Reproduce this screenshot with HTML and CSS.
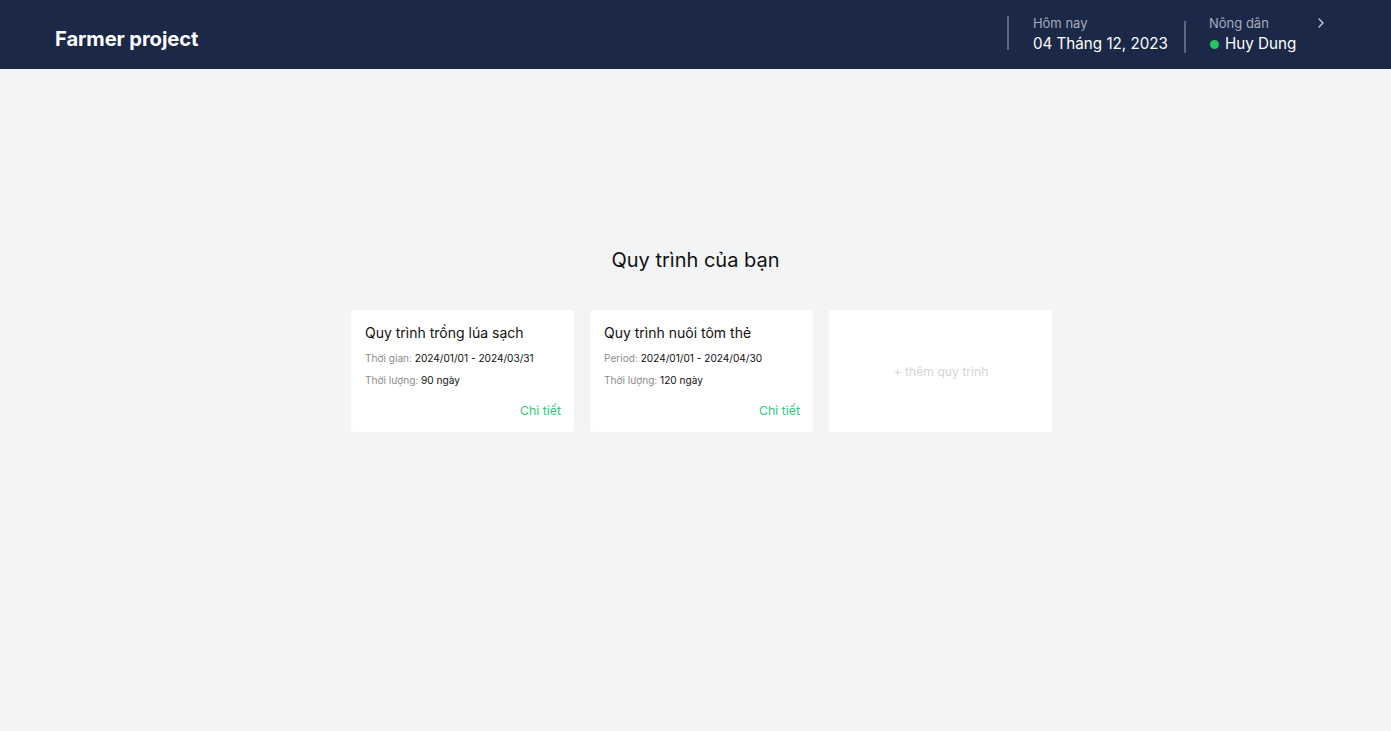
FILE: index.html
```html
<!DOCTYPE html>
<html lang="vi">
<head>
<meta charset="utf-8">
<title>Farmer project</title>
<link rel="stylesheet" href="styles.css">
</head>
<body>
<header class="topbar">
  <div class="brand">Farmer project</div>
  <div class="info">
    <div class="sep"></div>
    <div class="info-block date">
      <div class="info-label">Hôm nay</div>
      <div class="info-value">04 Tháng 12, 2023</div>
    </div>
    <div class="sep sep2"></div>
    <div class="info-block user">
      <div class="info-label">Nông dân</div>
      <div class="info-value"><span class="dot"></span>Huy Dung</div>
    </div>
    <svg class="chev" width="8" height="10" viewBox="0 0 8 10"><path d="M2 1 L6 5 L2 9" fill="none" stroke="#c9cfdb" stroke-width="1.3" stroke-linecap="round" stroke-linejoin="round"/></svg>
  </div>
</header>
<main class="main">
  <h1 class="title">Quy trình của bạn</h1>
  <div class="cards">
    <div class="card">
      <div class="card-title">Quy trình trồng lúa sạch</div>
      <div class="row"><span class="lbl">Thời gian:</span> 2024/01/01 - 2024/03/31</div>
      <div class="row"><span class="lbl">Thời lượng:</span> 90 ngày</div>
      <a class="detail">Chi tiết</a>
    </div>
    <div class="card">
      <div class="card-title">Quy trình nuôi tôm thẻ</div>
      <div class="row"><span class="lbl">Period:</span> 2024/01/01 - 2024/04/30</div>
      <div class="row"><span class="lbl">Thời lượng:</span> 120 ngày</div>
      <a class="detail">Chi tiết</a>
    </div>
    <div class="card add">+ thêm quy trình</div>
  </div>
</main>
</body>
</html>
```
FILE: styles.css
```css
* { box-sizing: border-box; }
html, body { margin: 0; padding: 0; }
body {
  font-family: Inter, "Noto Sans", sans-serif;
  background: #f3f4f6;
  color: #111;
  height: 731px;
}
.topbar {
  height: 69px;
  background: #1b2847;
  display: flex;
  align-items: center;
  justify-content: space-between;
  padding: 0 66px 0 55px;
  white-space: nowrap;
}
.brand {
  color: #fff;
  font-size: 20.2px;
  font-weight: 700;
  letter-spacing: -0.1px;
  margin-top: 7px;
}
.info {
  display: flex;
  align-items: center;
  height: 100%;
}
.sep {
  width: 2px;
  height: 34px;
  background: #5c6780;
  margin-bottom: 3px;
}
.sep2 { margin-bottom: 0; margin-top: 5px; height: 32px; }
.info-block {
  display: flex;
  flex-direction: column;
  gap: 2px;
}
.date { padding: 0 16px 0 24px; }
.user { padding-left: 23px; width: 131px; }
.info-label {
  color: #a4acbd;
  font-size: 13px;
  line-height: 17px;
}
.info-value {
  color: #fff;
  font-size: 15.2px;
  line-height: 20px;
  display: flex;
  align-items: center;
}
.dot {
  width: 9px;
  height: 9px;
  border-radius: 50%;
  background: #22c55e;
  margin: 1px 6px 0 1px;
}
.chev {
  align-self: flex-start;
  margin-top: 18px;
}
.main {
  display: flex;
  flex-direction: column;
  align-items: center;
  padding-top: 177px;
}
.title {
  margin: 0;
  font-size: 20px;
  font-weight: 400;
  line-height: 28px;
  color: #111;
}
.cards {
  margin-top: 36px;
  display: flex;
  gap: 16px;
  margin-left: 12px;
}
.card {
  width: 223px;
  height: 122px;
  background: #fff;
  border-radius: 3px;
  padding: 13px 13px 13px 14px;
  display: flex;
  flex-direction: column;
}
.card-title {
  font-size: 14px;
  line-height: 20px;
  color: #111;
}
.row {
  font-size: 10.1px;
  line-height: 14px;
  margin-top: 8px;
  color: #111;
}
.lbl { color: #8c8c8c; }
.detail {
  margin-top: auto;
  align-self: flex-end;
  color: #34c77b;
  font-size: 12.3px;
  line-height: 16px;
}
.card.add {
  align-items: center;
  justify-content: center;
  color: #d6d6d6;
  font-size: 12.2px;
}
```
